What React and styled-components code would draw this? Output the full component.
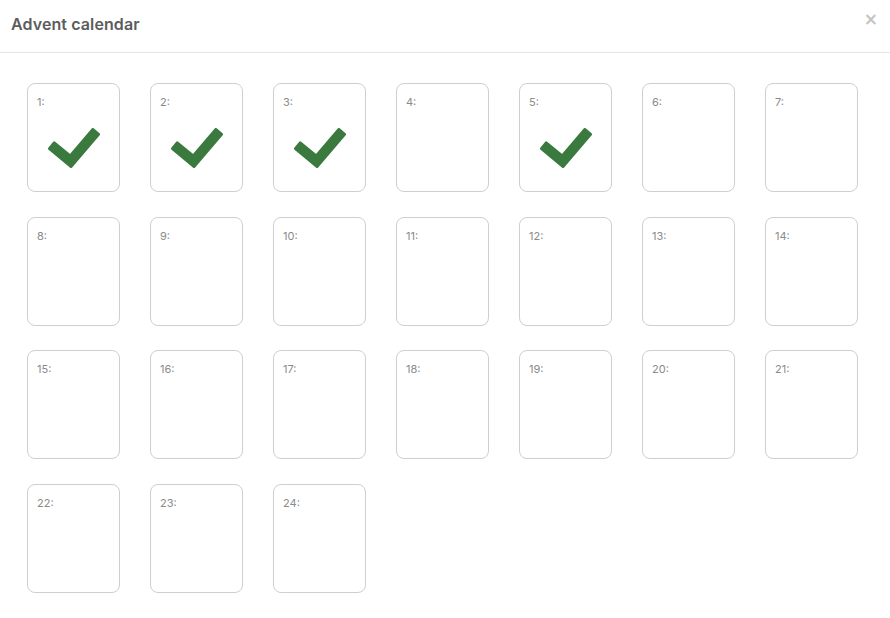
import React from 'react';
import styled, { createGlobalStyle } from 'styled-components';

const GlobalStyle = createGlobalStyle`
  html, body {
    margin: 0;
    padding: 0;
    background: #ffffff;
    font-family: Inter, "Liberation Sans", sans-serif;
  }
`;

const DAYS = Array.from({ length: 24 }, (_, idx) => idx + 1);
const OPENED = [1, 2, 3, 5];

const CheckIcon = () => (
  <CheckSvg
    width="52"
    height="40"
    viewBox="-1.74 -0.76 54.54 41.86"
    preserveAspectRatio="none"
  >
    <polygon
      points="4.84,14.68 21.52,28.42 45.24,0.74 51.32,5.94 22.48,39.58 -0.24,20.86"
      fill="#3b7a3e"
      stroke="#3b7a3e"
      strokeWidth="3"
      strokeLinejoin="round"
    />
  </CheckSvg>
);

const App = () => {
  return (
    <React.Fragment>
      <GlobalStyle />
      <Modal>
        <Header>
          <Title>Advent calendar</Title>
          <CloseButton aria-label="close">×</CloseButton>
        </Header>
        <Body>
          <DayGrid>
            {DAYS.map((day) => (
              <DayCard key={day}>
                <DayLabel>{day}:</DayLabel>
                {OPENED.includes(day) && <CheckIcon />}
              </DayCard>
            ))}
          </DayGrid>
        </Body>
      </Modal>
    </React.Fragment>
  );
};

export default App;

const Modal = styled.div`
  width: 890px;
  min-height: 618px;
  background: #ffffff;
`;

const Header = styled.header`
  display: flex;
  align-items: center;
  justify-content: space-between;
  height: 53px;
  padding: 0 12px 0 11px;
  box-sizing: border-box;
  border-bottom: 1px solid #e6e6e6;
`;

const Title = styled.h1`
  margin: 0 0 4px;
  font-size: 16px;
  font-weight: 600;
  color: #5c5c5c;
  letter-spacing: 0.1px;
`;

const CloseButton = styled.button`
  align-self: flex-start;
  margin-top: 9px;
  padding: 0;
  border: none;
  background: none;
  font-family: "DejaVu Sans", sans-serif;
  font-size: 17px;
  font-weight: 700;
  line-height: 20px;
  color: #c4c4c4;
  cursor: pointer;
`;

const Body = styled.main`
  padding: 30px 0 0 27px;
`;

const DayGrid = styled.div`
  display: grid;
  grid-template-columns: repeat(7, 93px);
  grid-auto-rows: 109px;
  column-gap: 30px;
  row-gap: 24.67px;
`;

const DayCard = styled.div`
  display: flex;
  flex-direction: column;
  box-sizing: border-box;
  padding: 12px 9px 0;
  border: 1px solid #cfcfcf;
  border-radius: 8px;
  background: #ffffff;
`;

const DayLabel = styled.span`
  font-size: 11px;
  line-height: 13px;
  color: #8a8a8a;
`;

const CheckSvg = styled.svg`
  align-self: center;
  margin-top: 19px;
`;
